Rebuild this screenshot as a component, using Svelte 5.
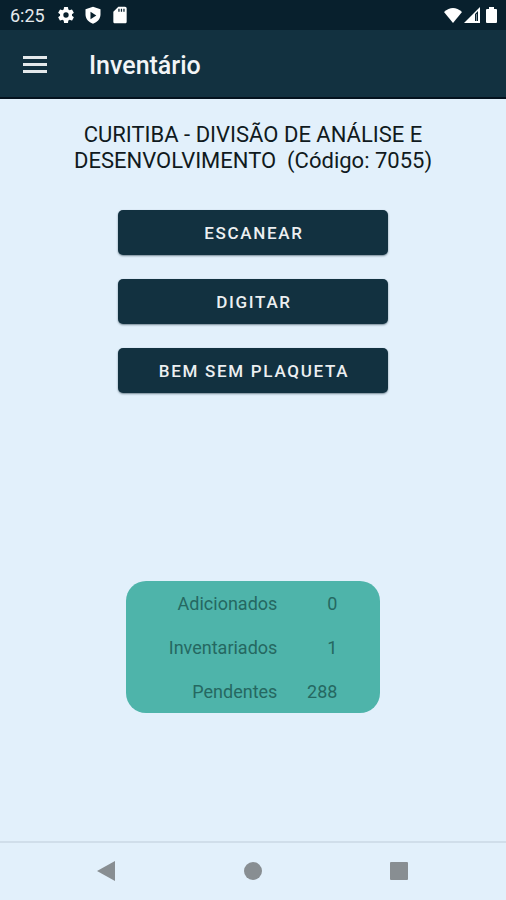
<script lang="ts">
  type Total = { label: string; value: number };

  let {
    unit = 'CURITIBA - DIVISÃO DE ANÁLISE E DESENVOLVIMENTO \u00a0(Código: 7055)',
    totals = [
      { label: 'Adicionados', value: 0 },
      { label: 'Inventariados', value: 1 },
      { label: 'Pendentes', value: 288 }
    ]
  }: { unit?: string; totals?: Total[] } = $props();

  const actions = ['ESCANEAR', 'DIGITAR', 'BEM SEM PLAQUETA'];
</script>

<div class="screen">
  <div class="status">
    <span class="time">6:25</span>
    <svg width="20" height="20" viewBox="0 0 24 24" aria-hidden="true">
      <path d="M19.14 12.94c.04-.3.06-.61.06-.94s-.02-.64-.07-.94l2.03-1.58a.49.49 0 0 0 .12-.61l-1.92-3.32a.49.49 0 0 0-.59-.22l-2.39.96a7 7 0 0 0-1.62-.94l-.36-2.54A.48.48 0 0 0 13.92 2.4h-3.84a.48.48 0 0 0-.47.41l-.36 2.54a7 7 0 0 0-1.62.94l-2.39-.96a.48.48 0 0 0-.59.22L2.74 8.87a.47.47 0 0 0 .12.61l2.03 1.58a7 7 0 0 0 0 1.88l-2.03 1.58a.49.49 0 0 0-.12.61l1.92 3.32c.12.22.37.29.59.22l2.39-.96c.5.38 1.03.7 1.62.94l.36 2.54c.05.24.24.41.48.41h3.84c.24 0 .44-.17.47-.41l.36-2.54a7 7 0 0 0 1.62-.94l2.39.96c.22.08.47 0 .59-.22l1.92-3.32a.47.47 0 0 0-.12-.61zM12 15.2a3.2 3.2 0 1 1 0-6.4 3.2 3.2 0 0 1 0 6.4z" />
    </svg>
    <svg width="20" height="20" viewBox="0 0 24 24" aria-hidden="true">
      <path fill-rule="evenodd" d="M12 2 3 5v6.500c0 5 3.800 9.400 9 11 5.200-1.600 9-6 9-11V5zM9 8 16 12.500 9 17z" />
    </svg>
    <svg width="20" height="20" viewBox="0 0 24 24" aria-hidden="true">
      <path fill-rule="evenodd" d="M18 2h-8L4 8v12c0 1.100.9 2 2 2h12c1.100 0 2-.9 2-2V4c0-1.100-.9-2-2-2zM10 4.500h1.500V8H10zM13 4.500h1.500V8H13zM16 4.500h1.500V8H16z" />
    </svg>
    <div class="signals">
      <svg width="18" height="18" viewBox="0 0 18 18" aria-hidden="true">
        <path d="M0 6Q9-2 18 6L9 17z" />
      </svg>
      <svg width="18" height="18" viewBox="0 0 18 18" aria-hidden="true">
        <path fill-rule="evenodd" d="M1 17 17 1v16zM12 8v7h3V5z" />
        <path d="M13 8h1v7h-1z" opacity="0.500" />
      </svg>
      <svg width="18" height="18" viewBox="0 0 18 18" aria-hidden="true">
        <path d="M7 1h5v2h2q1 0 1 1v12q0 1-1 1H5q-1 0-1-1V4q0-1 1-1h2z" />
      </svg>
    </div>
  </div>

  <header>
    <button type="button" class="menu" aria-label="Abrir menu">
      <svg width="24" height="18" viewBox="0 0 24 18" aria-hidden="true">
        <path d="M0 0h24v3H0zM0 7h24v3H0zM0 14h24v3H0z" />
      </svg>
    </button>
    <h1>Inventário</h1>
  </header>

  <main>
    <h2>{unit}</h2>
    <div class="actions">
      {#each actions as action}
        <button type="button">{action}</button>
      {/each}
    </div>
    <table>
      <tbody>
        {#each totals as total}
          <tr>
            <th scope="row">{total.label}</th>
            <td>{total.value}</td>
          </tr>
        {/each}
      </tbody>
    </table>
  </main>

  <nav>
    <button type="button" aria-label="Voltar">
      <svg width="20" height="20" viewBox="0 0 20 20" aria-hidden="true">
        <path d="M0 10 18 0v20z" />
      </svg>
    </button>
    <button type="button" aria-label="Início">
      <svg width="20" height="20" viewBox="0 0 20 20" aria-hidden="true">
        <circle cx="10" cy="10" r="9" />
      </svg>
    </button>
    <button type="button" aria-label="Recentes">
      <svg width="20" height="20" viewBox="0 0 20 20" aria-hidden="true">
        <rect x="1" y="1" width="18" height="18" rx="1" />
      </svg>
    </button>
  </nav>
</div>

<style>
  :global(body) {
    margin: 0;
    background: #e2f0fb;
  }
  .screen {
    display: flex;
    flex-direction: column;
    min-height: 100vh;
    font-family: Roboto, sans-serif;
    background: #e2f0fb;
  }
  svg {
    display: block;
    fill: currentColor;
  }
  button {
    border: none;
    font: inherit;
    cursor: pointer;
  }

  .status {
    display: flex;
    align-items: center;
    gap: 7px;
    height: 30px;
    padding: 0 6px 0 10px;
    background: #08202d;
    color: #fff;
  }
  .time {
    margin-right: 4px;
    font-size: 18px;
    color: #e4e9ec;
  }
  .signals {
    display: flex;
    gap: 1px;
    margin-left: auto;
  }

  header {
    display: flex;
    align-items: center;
    gap: 35px;
    height: 65px;
    padding: 2px 16px 0;
    border-bottom: 2px solid #04121e;
    background: #123140;
    color: #f2f5f7;
  }
  .menu {
    padding: 7px 7px 6px;
    background: none;
    color: #e4e9ec;
  }
  h1 {
    margin: 0;
    padding-top: 2px;
    font-size: 25px;
    font-weight: 500;
    line-height: 32px;
  }

  main {
    display: flex;
    flex: 1;
    flex-direction: column;
    align-items: center;
    padding: 23px 60px 128px;
  }
  h2 {
    margin: 0 0 36px;
    font-size: 22px;
    font-weight: 400;
    line-height: 26px;
    text-align: center;
    color: #101a20;
  }
  .actions {
    display: flex;
    flex-direction: column;
    gap: 24px;
    width: 70%;
    margin-bottom: 24px;
  }
  .actions button {
    height: 45px;
    padding: 0 0 0 2px;
    border-radius: 5px;
    background: #123140;
    box-shadow: 0 1px 2px rgba(8, 32, 45, 0.5);
    color: #eceff1;
    font-size: 17px;
    font-weight: 500;
    letter-spacing: 0.1em;
  }

  table {
    width: 66%;
    margin-top: auto;
    border-collapse: collapse;
    border-radius: 20px;
    background: #4eb4aa;
    color: #256861;
    font-size: 18px;
  }
  th,
  td {
    height: 44px;
    padding: 0;
    font-weight: 400;
    text-align: right;
  }
  td {
    width: 60px;
    padding-right: 43px;
  }

  nav {
    display: flex;
    justify-content: center;
    gap: 106px;
    padding: 8px 0 9px;
    border-top: 2px solid #d0deea;
    color: #888e92;
  }
  nav button {
    padding: 10px;
    background: none;
    color: inherit;
  }
</style>
